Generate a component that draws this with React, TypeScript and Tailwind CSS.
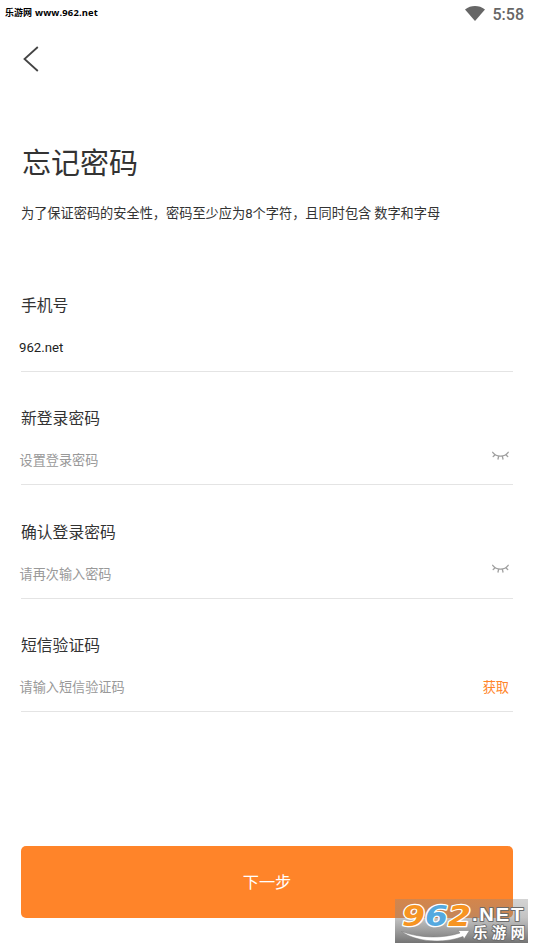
import type { ReactNode } from "react";

function ClosedEye() {
  return (
    <svg width="18" height="10" viewBox="0 0 18 10" fill="none" stroke="#a0a0a0" strokeWidth="1.3" strokeLinecap="round">
      <path d="M1.7 1.3C5.5 6.4 13.5 6.4 17.2 1.3M4.2 3.8L2.2 5.5M14.8 3.8L16.7 5.5M7.7 5.2L7 8M11.3 5.2L12 8" />
    </svg>
  );
}

interface FieldProps {
  label: string;
  text: string;
  filled?: boolean;
  action?: ReactNode;
}

function Field({ label, text, filled, action }: FieldProps) {
  return (
    <div className="flex h-[113.35px] flex-col justify-end border-b border-[#e4e4e4] pb-3">
      <div className="text-[15.8px] leading-6 text-[#333]">{label}</div>
      <div className="mt-[18px] flex h-6 items-center justify-between pr-1">
        <span
          className={
            filled
              ? "-ml-[2px] pt-[3px] font-['Roboto',sans-serif] text-[13.2px] leading-6 text-[#222]"
              : "-ml-[1.5px] text-[13.15px] leading-6 text-[#999]"
          }
        >
          {text}
        </span>
        {action}
      </div>
    </div>
  );
}

function Watermark() {
  return (
    <svg className="absolute left-[394px] top-[899px]" width="134" height="44" viewBox="0 0 134 44">
      <defs>
        <linearGradient id="shade" x1="0" y1="0" x2="0" y2="1">
          <stop offset="0" stopColor="#888" stopOpacity="0.36" />
          <stop offset="0.42" stopColor="#888" stopOpacity="0.5" />
          <stop offset="1" stopColor="#747474" stopOpacity="1" />
        </linearGradient>
      </defs>
      <rect x="1" width="133" height="44" fill="url(#shade)" />
      <g
        fontFamily="'DejaVu Sans', sans-serif"
        fontWeight="700"
        fontStyle="italic"
        fontSize="28"
        stroke="#fff"
        strokeWidth="2.4"
        strokeLinejoin="round"
        paintOrder="stroke"
      >
        <text x="8" y="26.5" textLength="23" lengthAdjust="spacingAndGlyphs" fill="#f79421">9</text>
        <text x="31" y="26.5" textLength="23" lengthAdjust="spacingAndGlyphs" fill="#55a9df">6</text>
        <text x="54" y="26.5" textLength="23" lengthAdjust="spacingAndGlyphs" fill="#f79421">2</text>
      </g>
      <path d="M7.5 32.5C25 39 48 40 66 34L64 31.5L75.5 31.5L70 40L69 37.5C49 45 22 43 7.5 32.5Z" fill="#fff" stroke="#777" strokeWidth="0.5" />
      <g fill="#fff" stroke="#6b6b6b" strokeWidth="1.8" strokeLinejoin="round" paintOrder="stroke" fontWeight="700">
        <text x="78" y="21.5" textLength="53" lengthAdjust="spacingAndGlyphs" fontFamily="'Liberation Sans', sans-serif" fontSize="17.5" letterSpacing="1.5">.NET</text>
        <text x="79" y="39" textLength="52" fontFamily="'Noto Sans CJK SC', sans-serif" fontSize="14.5">乐游网</text>
      </g>
    </svg>
  );
}

export default function App() {
  return (
    <main className="relative flex h-[949px] w-[534px] flex-col overflow-hidden bg-white font-['Noto_Sans_CJK_SC',sans-serif]">
      <header className="flex h-7 items-center justify-between pl-[5px] pr-[10px]">
        <div className="-mt-[3px] flex items-center gap-[3px] text-[9px] font-bold leading-4 text-black">
          <span>乐游网</span>
          <span className="font-['Open_Sans',sans-serif] text-[9.4px] tracking-[0.15px]">www.962.net</span>
        </div>
        <div className="flex items-center gap-[8px] text-[#666]">
          <svg className="-mt-[2px]" width="20" height="15" viewBox="0 0 20 15" fill="currentColor">
            <path d="M0 3.5C6-1.1 14-1.1 20 3.5L10 15Z" />
          </svg>
          <span className="pt-[2px] font-['Roboto',sans-serif] text-base font-medium leading-7">5:58</span>
        </div>
      </header>

      <nav className="flex h-[62px] items-center pl-[23px]">
        <svg width="16" height="26" viewBox="0 0 16 26" fill="none" stroke="#444" strokeWidth="1.8">
          <path d="M14.8 1L1.5 13L14.8 25" />
        </svg>
      </nav>

      <section className="px-[21px] pt-[51px] text-[#333]">
        <h1 className="pl-[1px] text-[29px] leading-10">忘记密码</h1>
        <p className="mt-5 h-6 whitespace-nowrap text-[13.2px] leading-6">
          为了保证密码的安全性，密码至少应为<span className="font-['Roboto',sans-serif] leading-none">8</span>个字符，且同时包含 数字和字母
        </p>
      </section>

      <form className="mt-[33.6px] px-[21px]">
        <Field label="手机号" text="962.net" filled />
        <Field label="新登录密码" text="设置登录密码" action={<div className="-mt-[9px]"><ClosedEye /></div>} />
        <Field label="确认登录密码" text="请再次输入密码" action={<div className="-mt-[9px]"><ClosedEye /></div>} />
        <Field
          label="短信验证码"
          text="请输入短信验证码"
          action={<span className="text-[13.2px] leading-6 text-[#ff8429]">获取</span>}
        />
      </form>

      <button className="mx-[21px] mt-[134px] h-[72px] shrink-0 rounded-[5px] bg-[#ff8429] pb-[2px] text-[16.2px] text-white">
        下一步
      </button>
      <Watermark />
    </main>
  );
}
